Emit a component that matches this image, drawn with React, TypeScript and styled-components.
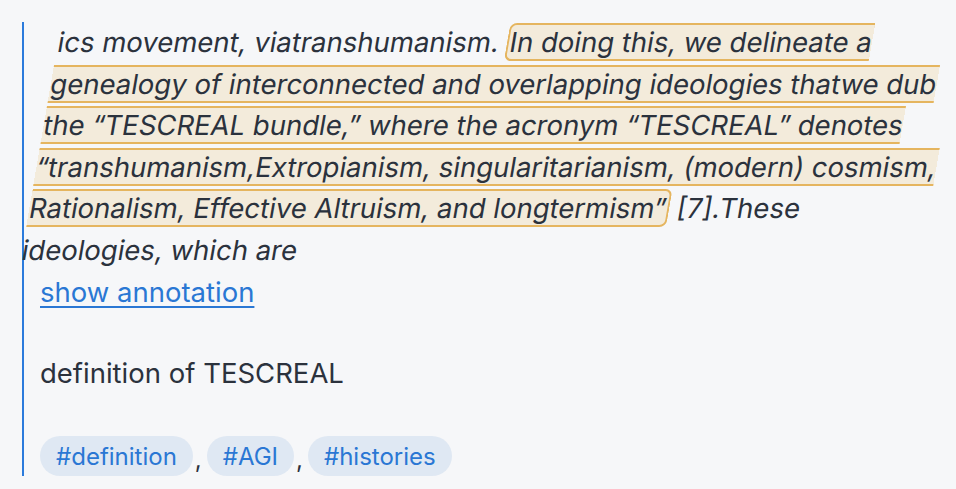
import React from "react";
import styled, { createGlobalStyle } from "styled-components";

const Global = createGlobalStyle`
  html, body {
    margin: 0;
    padding: 0;
    background: #f6f7f9;
  }
  body {
    font-family: Inter, "Noto Sans", "Liberation Sans", sans-serif;
    color: #2b323d;
  }
`;

const Page = styled.div`
  padding: 22px 16px 0 22px;
`;

const Quote = styled.blockquote`
  margin: 0;
  border-left: 2px solid #2b7bdc;
  padding-left: 16px;
  width: 900px;
`;

const Excerpt = styled.p`
  margin: 0;
  font-size: 27.5px;
  line-height: 41.5px;
  transform: skewX(-9.8deg);
`;

const Highlight = styled.mark`
  background: #f3ebdb;
  color: inherit;
  border: 2px solid #e5b55f;
  border-radius: 7px;
  padding: 0 1px;
`;

const Link = styled.a`
  display: block;
  font-size: 27.5px;
  line-height: 42px;
  color: #2a77d4;
  text-decoration: underline;
  text-underline-offset: 4px;
  text-decoration-thickness: 2px;
`;

const Note = styled.p`
  margin: 39px 0 0;
  font-size: 27.5px;
  line-height: 42px;
`;

const Tags = styled.div`
  display: flex;
  align-items: flex-end;
  margin-top: 42px;
  font-size: 24px;
`;

const Tag = styled.span`
  display: inline-flex;
  align-items: center;
  height: 40px;
  padding: 0 16px;
  border-radius: 20px;
  background: #dfe8f3;
  color: #2a77d4;
`;

const Sep = styled.span`
  padding: 0 5px 0 2px;
  line-height: 32px;
  color: #2b323d;
`;

const tags = ["#definition", "#AGI", "#histories"];

export default function App() {
  return (
    <>
      <Global />
      <Page>
        <Quote>
          <Excerpt>
            ics movement, viatranshumanism.{" "}
            <Highlight>
              In doing this, we delineate a genealogy of interconnected and
              overlapping ideologies thatwe dub the “TESCREAL bundle,” where the
              acronym “TESCREAL” denotes “transhumanism,Extropianism,
              singularitarianism, (modern) cosmism, Rationalism, Effective
              Altruism, and longtermism”
            </Highlight>{" "}
            [7].These ideologies, which are
          </Excerpt>
          <Link href="#">show annotation</Link>
          <Note>definition of TESCREAL</Note>
          <Tags>
            {tags.map((t, i) => (
              <React.Fragment key={t}>
                {i > 0 && <Sep>,</Sep>}
                <Tag>{t}</Tag>
              </React.Fragment>
            ))}
          </Tags>
        </Quote>
      </Page>
    </>
  );
}
